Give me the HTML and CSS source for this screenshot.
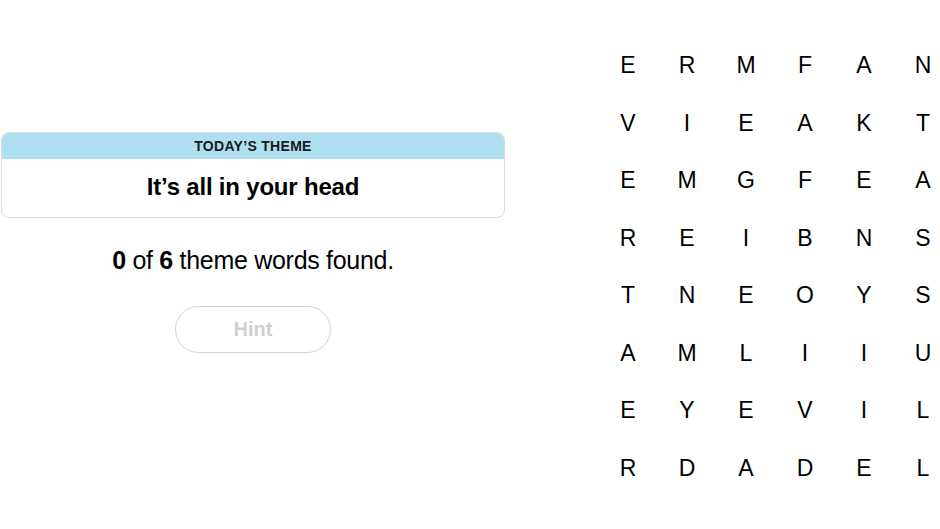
FILE: index.html
```html
<!DOCTYPE html>
<html>
<head>
<meta charset="utf-8">
<link rel="stylesheet" href="styles.css">
</head>
<body>
<main class="game">
  <section class="side">
    <div class="theme-card">
      <div class="theme-label">TODAY’S THEME</div>
      <div class="theme-title">It’s all in your head</div>
    </div>
    <p class="progress"><b>0</b> of <b>6</b> theme words found.</p>
    <button class="hint">Hint</button>
  </section>
  <section class="board">
    <span>E</span><span>R</span><span>M</span><span>F</span><span>A</span><span>N</span>
    <span>V</span><span>I</span><span>E</span><span>A</span><span>K</span><span>T</span>
    <span>E</span><span>M</span><span>G</span><span>F</span><span>E</span><span>A</span>
    <span>R</span><span>E</span><span>I</span><span>B</span><span>N</span><span>S</span>
    <span>T</span><span>N</span><span>E</span><span>O</span><span>Y</span><span>S</span>
    <span>A</span><span>M</span><span>L</span><span>I</span><span>I</span><span>U</span>
    <span>E</span><span>Y</span><span>E</span><span>V</span><span>I</span><span>L</span>
    <span>R</span><span>D</span><span>A</span><span>D</span><span>E</span><span>L</span>
  </section>
</main>
</body>
</html>
```
FILE: styles.css
```css
* { box-sizing: border-box; }
html, body { margin: 0; padding: 0; background: #fff; overflow: hidden; }
body { font-family: "Liberation Sans", Arial, sans-serif; color: #000; width: 940px; height: 529px; }

.game {
  display: flex;
  align-items: flex-start;
}

.side {
  width: 504px;
  margin-left: 1px;
  padding-top: 132px;
  display: flex;
  flex-direction: column;
  align-items: center;
}

.theme-card {
  width: 504px;
  border: 1px solid #dcdcdc;
  border-radius: 8px;
  overflow: hidden;
}

.theme-label {
  background: #addff0;
  height: 26px;
  line-height: 27px;
  text-align: center;
  font-size: 14px;
  font-weight: 700;
  letter-spacing: 0.3px;
  color: #1a1a1a;
}

.theme-title {
  height: 58px;
  line-height: 56px;
  text-align: center;
  font-size: 24px;
  font-weight: 700;
  letter-spacing: -0.2px;
}

.progress {
  margin: 28px 0 0;
  font-size: 25px;
  line-height: 28px;
  letter-spacing: -0.3px;
}

.hint {
  margin-top: 32px;
  width: 156px;
  height: 47px;
  border: 1.5px solid #d2d2d2;
  border-radius: 24px;
  background: #fff;
  color: #cfcfcf;
  font-family: "Liberation Sans", Arial, sans-serif;
  font-size: 20px;
  font-weight: 700;
}

.board {
  margin-left: 105px;
  margin-top: 37px;
  display: grid;
  grid-template-columns: repeat(6, 36px);
  column-gap: 23px;
  grid-auto-rows: 57.5px;
}

.board span {
  display: flex;
  align-items: center;
  justify-content: center;
  font-size: 23px;
  color: #000;
}
```
